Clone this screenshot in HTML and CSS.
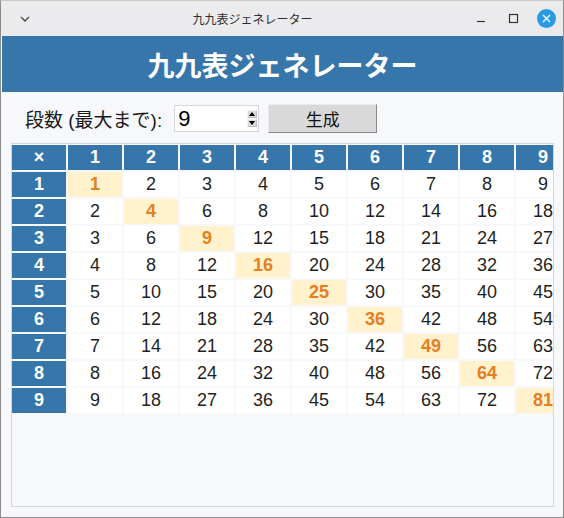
FILE: index.html
```html
<!DOCTYPE html>
<html lang="ja">
<head>
<meta charset="utf-8">
<title>九九表ジェネレーター</title>
<link rel="stylesheet" href="styles.css">
</head>
<body>
<div class="window">
  <div class="titlebar">
    <div class="tb-left">
      <svg width="12" height="8" viewBox="0 0 12 8"><path d="M2 2 L6 6 L10 2" fill="none" stroke="#444" stroke-width="1.3"/></svg>
    </div>
    <div class="tb-title">九九表ジェネレーター</div>
    <div class="tb-right">
      <svg class="tb-min" width="12" height="12" viewBox="0 0 12 12"><path d="M1 8.5 H9" stroke="#333" stroke-width="1.2"/></svg>
      <svg class="tb-max" width="12" height="12" viewBox="0 0 12 12"><rect x="1.5" y="1.5" width="8" height="8" fill="none" stroke="#333" stroke-width="1.2"/></svg>
      <svg class="tb-close" width="19" height="19" viewBox="0 0 19 19"><circle cx="9.5" cy="9.5" r="9.5" fill="#2a9ae4"/><path d="M6 6 L13 13 M13 6 L6 13" stroke="#fff" stroke-width="1.3"/></svg>
    </div>
  </div>
  <div class="app">
    <header class="hero">九九表ジェネレーター</header>
    <div class="controls">
      <span class="label">段数 (最大まで):</span>
      <div class="spin">
        <span class="spin-val">9</span>
        <div class="spin-btns">
          <span class="sb"><svg width="6" height="4" viewBox="0 0 6 4"><path d="M0 4 L3 0 L6 4Z" fill="#000"/></svg></span>
          <span class="sb"><svg width="6" height="4" viewBox="0 0 6 4"><path d="M0 0 L3 4 L6 0Z" fill="#000"/></svg></span>
        </div>
      </div>
      <button class="gen">生成</button>
    </div>
    <div class="frame">
      <div class="grid" id="grid"></div>
    </div>
  </div>
</div>
<script>
  var g = document.getElementById('grid');
  var h = '<div class="c hd">×</div>';
  for (var j = 1; j <= 9; j++) h += '<div class="c hd">' + j + '</div>';
  for (var i = 1; i <= 9; i++) {
    h += '<div class="c hd">' + i + '</div>';
    for (var k = 1; k <= 9; k++) {
      h += '<div class="c' + (i === k ? ' sq' : '') + '">' + (i * k) + '</div>';
    }
  }
  g.innerHTML = h;
</script>
</body>
</html>
```
FILE: styles.css
```css
* { box-sizing: border-box; }
html, body { margin: 0; padding: 0; }
body {
  width: 564px;
  height: 518px;
  overflow: hidden;
  font-family: "Liberation Sans", "Noto Sans CJK JP", sans-serif;
  background: #f6f8fb;
}
.window {
  width: 564px;
  height: 518px;
  border: 1px solid #8c8c8c;
  border-top-color: #c8c8c8;
  display: flex;
  flex-direction: column;
  background: #f6f8fb;
}
.titlebar {
  height: 35px;
  flex: none;
  background: #ebebed;
  display: flex;
  align-items: center;
  position: relative;
}
.tb-left {
  width: 60px;
  padding-left: 18px;
  display: flex;
  align-items: center;
}
.tb-title {
  flex: 1;
  text-align: center;
  font-family: "Noto Sans CJK JP", sans-serif;
  font-size: 12px;
  color: #2e2e2e;
  padding-right: 32px;
}
.tb-right {
  display: flex;
  align-items: center;
  gap: 0;
  padding-right: 7px;
}
.tb-min { margin-right: 20px; }
.tb-max { margin-right: 17px; }
.app {
  flex: 1;
  display: flex;
  flex-direction: column;
  padding-left: 1px;
}
.hero {
  height: 56px;
  flex: none;
  background: #3776aa;
  color: #fff;
  font-family: "Noto Sans CJK JP", sans-serif;
  font-weight: bold;
  font-size: 27px;
  display: flex;
  align-items: center;
  justify-content: center;
}
.controls {
  display: flex;
  align-items: center;
  height: 51px;
  flex: none;
  padding-top: 2px;
  padding-left: 23px;
}
.label {
  font-family: "Liberation Sans", "Noto Sans CJK JP", sans-serif;
  font-size: 19px;
  color: #1a1a1a;
  margin-right: 12px;
}
.spin {
  width: 85px;
  height: 27px;
  background: #fff;
  border: 1px solid #d6d6d6;
  display: flex;
  align-items: center;
  justify-content: space-between;
  padding-left: 3px;
  padding-right: 1px;
}
.spin-val {
  font-size: 22px;
  color: #000;
}
.spin-btns {
  display: flex;
  flex-direction: column;
  gap: 1px;
}
.sb {
  width: 10px;
  height: 8px;
  background: #d9d9d9;
  border: 1px solid #bdbdbd;
  border-top-color: #f2f2f2;
  border-left-color: #f2f2f2;
  display: flex;
  align-items: center;
  justify-content: center;
}
.gen {
  margin-left: 9px;
  width: 109px;
  height: 29px;
  background: #d9d9d9;
  border: 1px solid #8a8a8a;
  border-top-color: #ececec;
  border-left-color: #ececec;
  font-family: "Noto Sans CJK JP", sans-serif;
  font-size: 17px;
  color: #111;
  padding: 0;
}
.frame {
  margin: 0 9px 10px 9px;
  flex: 1;
  border: 1px solid #d3d6da;
  overflow: hidden;
  padding-top: 1px;
}
.grid {
  display: grid;
  grid-template-columns: repeat(10, 54px);
  grid-auto-rows: 25px;
  gap: 2px;
  width: max-content;
}
.c {
  background: #fff;
  color: #1f1f1f;
  font-size: 18px;
  display: flex;
  align-items: center;
  justify-content: center;
}
.c.hd {
  background: #3776aa;
  color: #fff;
  font-weight: bold;
}
.c.sq {
  background: #fff2cc;
  color: #e67e22;
  font-weight: bold;
}
```
